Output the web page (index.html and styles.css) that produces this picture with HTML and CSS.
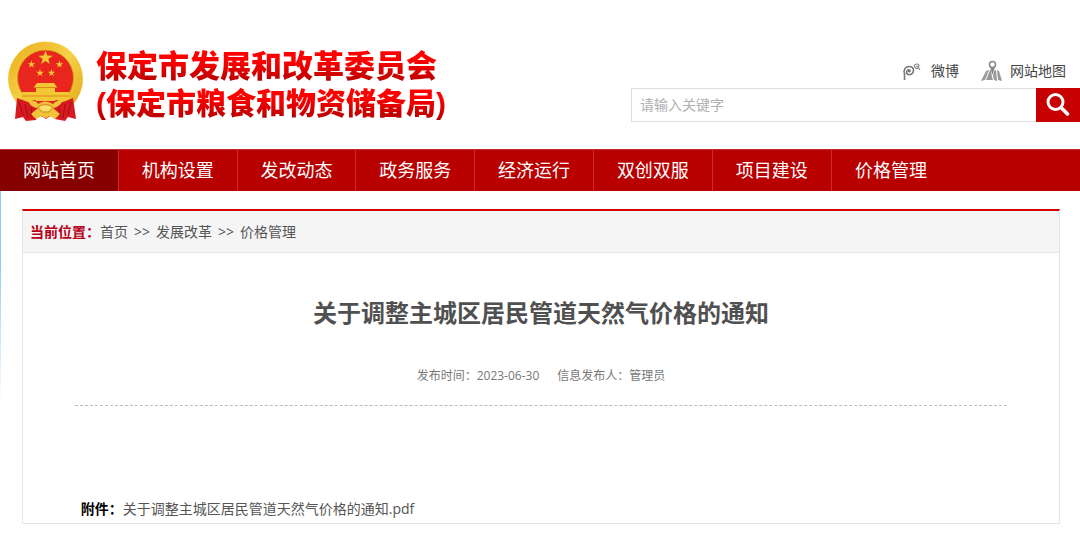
FILE: index.html
```html
<!DOCTYPE html>
<html lang="zh-CN">
<head>
  <meta charset="UTF-8">
  <meta name="viewport" content="width=device-width, initial-scale=1.0">
  <title>关于调整主城区居民管道天然气价格的通知</title>
  <link rel="stylesheet" href="styles.css">
</head>
<body>
  <header class="header">
    <div class="brand">
      <svg class="emblem" viewBox="0 0 76 80" aria-hidden="true">
        <defs>
          <linearGradient id="gold" x1="0" y1="0" x2="1" y2="1">
            <stop offset="0" stop-color="#eeb01c"/>
            <stop offset=".5" stop-color="#f8d64c"/>
            <stop offset="1" stop-color="#e2a716"/>
          </linearGradient>
          <path id="star" d="M0-7.500 1.800-2.400 7.200-2.300 2.800.9 4.400 6 0 2.900-4.400 6-2.800.9-7.200-2.300-1.800-2.400Z"/>
        </defs>
        <circle cx="37.500" cy="38" r="37.500" fill="url(#gold)"/>
        <circle cx="37.500" cy="38" r="33" fill="none" stroke="#c98c12" stroke-width="6" stroke-dasharray="1 1" opacity=".15"/>
        <circle cx="37.500" cy="37" r="28" fill="#e9261d" stroke="#d69a16"/>
        <g fill="#f3c634">
          <use href="#star" transform="translate(37.500 17)"/>
          <use href="#star" transform="translate(23.500 23.500) scale(.52)"/>
          <use href="#star" transform="translate(51.500 23.500) scale(.52)"/>
          <use href="#star" transform="translate(32 32) scale(.52)"/>
          <use href="#star" transform="translate(43.500 32) scale(.52)"/>
          <path d="M29 42H46L49 46H26ZM28 47H47V51H61L62 60H13L14 51H28Z"/>
        </g>
        <path d="M26 46.500H49M14 55H61" stroke="#d98a19"/>
        <path d="M9 57 20 61 27 59 34 64H41L48 59 55 61 65 57 68 78 60 76 57 80 47 78 45 73 38 78 30 73 28 79 18 80 15 76 7 78Z" fill="#d71920"/>
        <path d="M11 61 15 74M17 63 20 77M24 66 23 76M63 61 60 74M57 63 55 77M51 66 52 76" stroke="#a30d15" fill="none"/>
        <path d="M20 60Q29 59 30 63 37 58 45 63 48 59 55 60 50 67 45 67L52 73 47 78 41 75Q38 79 34 75L28 78 23 73 30 67Q23 67 20 60Z" fill="#f2c33a"/>
        <path d="M30 66Q37 61 45 66L41 71H34Z" fill="#f9dc6b" stroke="#c8890e"/>
      </svg>
      <div class="brand-name">
        <span class="brand-line brand-main">保定市发展和改革委员会</span>
        <span class="brand-line brand-sub">(保定市粮食和物资储备局)</span>
      </div>
    </div>
    <div class="tools">
      <div class="quick-links">
        <a href="#">
          <svg class="icon" viewBox="0 0 21 22" fill="none" stroke="#777" aria-hidden="true">
            <path d="M2.500 20V13M2.500 14C1 9 4 6.500 7 6.500 10 6.500 11.500 8.500 11.500 10.500 11.500 13.500 8.500 15 6 14.500 4 14 4 10 7 9.500" stroke-width="1.600"/>
            <circle cx="7.300" cy="10.800" r="1.600" fill="#777" stroke="none"/>
            <path d="M16.500 8C13.500 9 12 7 12.500 5.500 13 3.500 17 3.500 17 5.500 17 7 14.500 7 14.500 5.500M16 7 18 10" stroke="#888" stroke-width="1.200"/>
          </svg>
          微博
        </a>
        <a href="#">
          <svg class="icon" viewBox="0 0 21 22" aria-hidden="true">
            <path d="M5 11 8 10 4 20 0 21ZM9 10H10L11 17 12 20 5 20ZM13 11 15 10 16 21 13 20 12 16ZM16 10 18 11 21 21 17 20Z" fill="#999"/>
            <path d="M9 7 11.500 15 14 7Z" fill="#888"/>
            <circle cx="11.500" cy="4.500" r="3" fill="#fff" stroke="#888" stroke-width="1.500"/>
          </svg>
          网站地图
        </a>
      </div>
      <form class="search">
        <input type="text" class="search-input" placeholder="请输入关键字" aria-label="请输入关键字">
        <button type="button" class="search-btn" aria-label="搜索">
          <svg viewBox="0 0 24 24" fill="none" stroke="#fff" aria-hidden="true">
            <circle cx="9.500" cy="9" r="7.500" stroke-width="3"/>
            <path d="M15.500 15 21.500 21" stroke-width="3.600" stroke-linecap="round"/>
          </svg>
        </button>
      </form>
    </div>
  </header>

  <nav class="nav">
    <a class="active" href="#">网站首页</a>
    <a href="#">机构设置</a>
    <a href="#">发改动态</a>
    <a href="#">政务服务</a>
    <a href="#">经济运行</a>
    <a href="#">双创双服</a>
    <a href="#">项目建设</a>
    <a href="#">价格管理</a>
  </nav>

  <main class="main">
    <div class="panel">
      <div class="breadcrumb">
        <strong>当前位置：</strong>
        <a href="#">首页</a>
        <span>&gt;&gt;</span>
        <a href="#">发展改革</a>
        <span>&gt;&gt;</span>
        <a href="#">价格管理</a>
      </div>
      <article class="article">
        <h1>关于调整主城区居民管道天然气价格的通知</h1>
        <div class="meta">
          <span>发布时间：2023-06-30</span>
          <span>信息发布人：管理员</span>
        </div>
        <div class="attachment">
          <strong>附件：</strong>
          <a href="#">关于调整主城区居民管道天然气价格的通知.pdf</a>
        </div>
      </article>
    </div>
  </main>
</body>
</html>
```
FILE: styles.css
```css
* { margin: 0; padding: 0; box-sizing: border-box; }
body {
  font-family: "Open Sans", "Noto Sans CJK SC", sans-serif;
  font-size: 14px;
  color: #555;
  background: #fff;
}
a { color: inherit; text-decoration: none; }
.header {
  display: flex;
  justify-content: space-between;
  padding: 41px 0 27px 8px;
}
.brand {
  display: flex;
  align-items: flex-start;
  gap: 12px;
}
.emblem { width: 76px; height: 80px; }
.brand-name {
  display: flex;
  flex-direction: column;
  padding-top: 7px;
  font-family: "Liberation Sans", "Noto Sans CJK SC", sans-serif;
  font-weight: 900;
  line-height: 37px;
}
.brand-line {
  background: linear-gradient(#ff0000 35%, #b80000 90%);
  -webkit-background-clip: text;
  background-clip: text;
  color: transparent;
}
.brand-main { font-size: 31px; }
.brand-sub { font-size: 30px; }
.tools {
  width: 449px;
  padding-top: 19px;
}
.quick-links {
  display: flex;
  justify-content: flex-end;
  gap: 22px;
  padding-right: 14px;
  line-height: 22px;
  color: #444;
}
.quick-links a {
  display: flex;
  align-items: center;
  gap: 8px;
}
.icon { width: 21px; height: 22px; }
.search {
  display: flex;
  height: 34px;
  margin-top: 6px;
}
.search-input {
  flex: 1;
  min-width: 0;
  padding: 0 8px 2px;
  border: 1px solid #ddd;
  border-right: none;
  font: inherit;
  color: #555;
}
.search-input::placeholder { color: #b0b0b0; }
.search-btn {
  width: 44px;
  border: none;
  background: #c70000;
  cursor: pointer;
}
.search-btn svg {
  display: block;
  width: 24px;
  height: 24px;
  margin: 0 auto;
}
.nav {
  display: flex;
  background: #b90000;
  border-top: 1px solid #c43030;
}
.nav a {
  width: 11%;
  border-right: 1px solid #cf2a2a;
  color: #fff;
  font-size: 18px;
  line-height: 41px;
  text-align: center;
}
.nav a:last-child { border-right: none; }
.nav .active, .nav a:hover { background: #870000; }
.main {
  padding: 18px 20px 12px 22px;
  background: linear-gradient(#87cbff 20%, #ffffff 62%) left top / 1px 100% no-repeat;
}
.panel {
  border: 1px solid #e6e6e6;
  border-top: 2px solid #d70000;
}
.breadcrumb {
  display: flex;
  gap: 6px;
  padding: 0 7px;
  background: #f5f5f5;
  border-bottom: 1px solid #e6e6e6;
  line-height: 41px;
}
.breadcrumb strong {
  margin-right: -6px;
  color: #b8001a;
}
.article { padding: 42px 5% 0; }
.article h1 {
  font-size: 24px;
  line-height: 36px;
  text-align: center;
  color: #505050;
}
.meta {
  display: flex;
  justify-content: center;
  gap: 18px;
  padding: 35px 0 19px;
  border-bottom: 1px dashed #bbb;
  font-size: 12px;
  line-height: 20px;
  color: #777;
}
.attachment {
  display: flex;
  padding: 91px 6px 3px;
  line-height: 23px;
}
.attachment strong { color: #000; }
```
